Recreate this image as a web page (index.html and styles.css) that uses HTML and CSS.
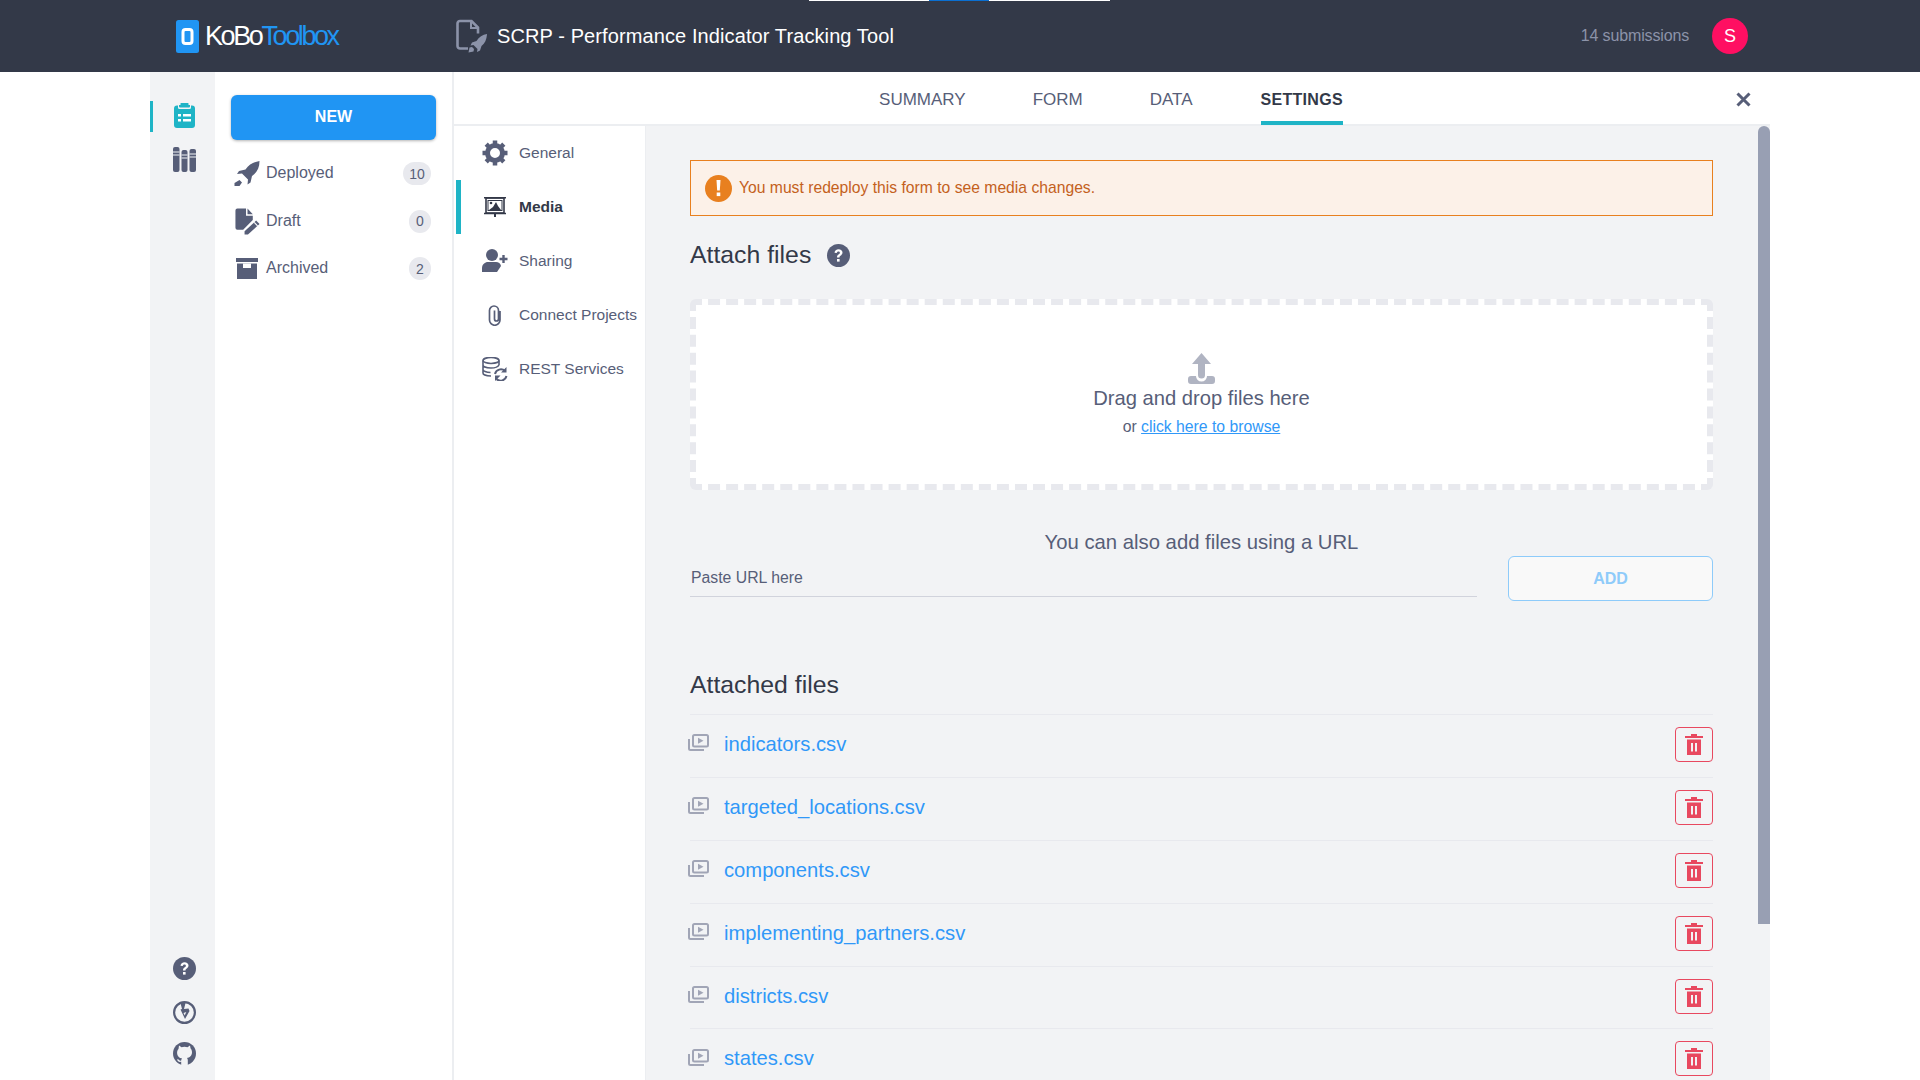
FILE: index.html
```html
<!DOCTYPE html>
<html lang="en">
<head>
    <meta charset="UTF-8">
    <title>KoBoToolbox</title>
    <link rel="stylesheet" href="styles.css">
</head>
<body>
    <div class="loadingStrip">
        <span class="stripWhite"></span><span class="stripBlue"></span><span class="stripWhite stripShort"></span>
    </div>

    <header class="topBar">
        <div class="logo">
            <svg class="logoMark" width="23" height="33" viewBox="0 0 23 33">
                <rect width="23" height="33" rx="2.5" fill="#2095f3"/>
                <rect x="7" y="9.5" width="9" height="14" rx="2.5" fill="none" stroke="#fff" stroke-width="3"/>
            </svg>
            <span class="logoKobo">KoBo</span><span class="logoToolbox">Toolbox</span>
        </div>
        <div class="assetTitle">
            <svg width="31" height="34" viewBox="0 0 31 34">
                <path d="M12 29.500H4A2.500 2.500 0 0 1 1.500 27V4.500A2.500 2.500 0 0 1 4 2h11.500l6.500 6.500v6" fill="none" stroke="#8c93a9" stroke-width="2.6"/>
                <path d="M15 2.500v6.500h7" fill="none" stroke="#8c93a9" stroke-width="2"/>
                <path d="M31 15c-4.500.5-8 3-10.500 7l-4.500 1.500-1.500 3 3-.5 4 4-.5 3 3-1.500 1.500-4.500c3.500-2.500 5-6.500 5.500-11.500zM12.500 33.500l1-5 2.500-.5 2 2-.5 2.500z" fill="#8c93a9"/>
            </svg>
            <span>SCRP - Performance Indicator Tracking Tool</span>
        </div>
        <div class="submissionCount">14 submissions</div>
        <div class="avatar">S</div>
    </header>

    <div class="pageWrap">
        <nav class="iconRail">
            <div class="railTop">
                <a class="railItem railActive">
                    <svg width="21" height="25" viewBox="0 0 21 25">
                        <path d="M5 2h1.500V.5a.5.5 0 0 1 .5-.5h7a.5.5 0 0 1 .5.5V2H16v1.500a1 1 0 0 1-1 1H6a1 1 0 0 1-1-1z" fill="#1fb4c6"/>
                        <path d="M3 2.500h1v2A1.500 1.500 0 0 0 5.500 6h10A1.500 1.500 0 0 0 17 4.500v-2h1a3 3 0 0 1 3 3V22a3 3 0 0 1-3 3H3a3 3 0 0 1-3-3V5.500a3 3 0 0 1 3-3z" fill="#1fb4c6"/>
                        <path d="M4 11h3v2.400H4zM9 11h8v2.400H9zM4 16h3v2.400H4zM9 16h8v2.400H9z" fill="#fff"/>
                    </svg>
                </a>
                <a class="railItem">
                    <svg width="23" height="25" viewBox="0 0 23 25">
                        <rect width="6.500" height="25" rx="2" fill="#575e78"/>
                        <rect x="8.500" y="3" width="6" height="22" rx="2" fill="#575e78"/>
                        <rect x="16.500" y="2" width="6.500" height="23" rx="2" fill="#575e78"/>
                        <path d="M0 5h6.500M0 8h6.500M8.500 8h6M8.500 11h6M16.500 7h6.500M16.500 10h6.500" stroke="#f2f3f5" stroke-width="1.100"/>
                    </svg>
                </a>
            </div>
            <div class="railBottom">
                <a class="railSmall railHelp">
                    <svg width="23" height="23" viewBox="0 0 23 23"><use href="#helpCircle"/></svg>
                </a>
                <a class="railSmall">
                    <svg width="23" height="23" viewBox="0 0 23 23">
                        <circle cx="11.500" cy="11.500" r="10.400" fill="none" stroke="#575e78" stroke-width="2.200"/>
                        <path d="M7.500 2h5l-1.500 6 4.500-.5 1 2.500-4.500 8-4.500-9.500 1.500-.5z" fill="#575e78"/>
                        <path d="M10.500 12l2.800-1-1.600 3.500z" fill="#f2f3f5"/>
                    </svg>
                </a>
                <a class="railSmall">
                    <svg width="23" height="23" viewBox="0 0 23 23">
                        <circle cx="11.500" cy="11.500" r="11.500" fill="#575e78"/>
                        <path d="M6 3.500l2.500 1.800a10 10 0 0 1 6 0L17 3.500l.6 3.100c1 1.100 1.400 2.300 1.400 3.700 0 3.600-2.400 5.400-5 5.700.6.600.8 1.300.8 2.200V23H8.200v-3.200c-2.200.5-3.500-.3-4.200-2.500l1.600.3c.6 1 1.300 1.300 2.600.9.100-.9.400-1.600.9-2-2.600-.4-5-2.200-5-5.700 0-1.400.4-2.600 1.400-3.700z" fill="#f2f3f5"/>
                    </svg>
                </a>
            </div>
        </nav>

        <aside class="formsColumn">
            <button class="newButton">NEW</button>
            <ul class="stateList">
                <li class="stateItem">
                    <svg width="26" height="26" viewBox="0 0 26 26">
                        <path d="M25.500 0c-6 1-10.500 3.500-14 8.500l-6.500 1.500-2 3 5-.5 6 6-.5 5 3-2 1.500-6.500c5-3.500 7.500-8 7.500-15zM5.500 19l2.500 2.500-2.500 3.500H.500v-3z" fill="#575e78"/>
                    </svg>
                    <span class="stateName">Deployed</span>
                    <span class="stateBadge">10</span>
                </li>
                <li class="stateItem">
                    <svg width="26" height="27" viewBox="-1.500 0 27 27">
                        <path d="M2 0h9v7.500h7v4.500L8 22H2a2 2 0 0 1-2-2V2a2 2 0 0 1 2-2z" fill="#575e78"/>
                        <path d="M12.500 0l5.500 6h-5.500z" fill="#575e78"/>
                        <path d="M21.500 12.500l3.500 3.500-12 11H9.500v-3.500z" fill="#575e78"/>
                        <path d="M19.500 14.500l3.500 3.500" stroke="#fff" stroke-width="1.200"/>
                    </svg>
                    <span class="stateName">Draft</span>
                    <span class="stateBadge badgeSmall">0</span>
                </li>
                <li class="stateItem">
                    <svg width="26" height="22" viewBox="-2 0 26 22">
                        <rect width="22" height="4" fill="#575e78"/>
                        <path d="M1 5.500h20V21H1z" fill="#575e78"/>
                        <rect x="7" y="5.500" width="8" height="4.500" fill="#fff"/>
                    </svg>
                    <span class="stateName">Archived</span>
                    <span class="stateBadge badgeSmall">2</span>
                </li>
            </ul>
        </aside>

        <main class="formView">
            <div class="tabBar">
                <a class="tab">SUMMARY</a>
                <a class="tab">FORM</a>
                <a class="tab">DATA</a>
                <a class="tab tabActive">SETTINGS</a>
                <a class="closeLink">
                    <svg width="15" height="15" viewBox="0 0 15 15">
                        <path d="M1.500 1.500l12 12M13.500 1.500l-12 12" stroke="#575e78" stroke-width="3"/>
                    </svg>
                </a>
            </div>

            <div class="settingsBody">
                <ul class="settingsNav">
                    <li class="settingsItem">
                        <svg width="26" height="26" viewBox="0 0 26 26">
                            <circle cx="13" cy="13" r="7.500" fill="none" stroke="#575e78" stroke-width="5"/>
                            <path d="M13 .5v4M13 21.500v4M.5 13h4M21.500 13h4M4.200 4.200l2.800 2.800M19 19l2.800 2.800M21.800 4.200L19 7M7 19l-2.800 2.800" stroke="#575e78" stroke-width="4.500"/>
                        </svg>
                        <span>General</span>
                    </li>
                    <li class="settingsItem settingsActive">
                        <svg width="26" height="20" viewBox="-2 0 26 20">
                            <path d="M0 .8h22M0 16.500h22" stroke="#333848" stroke-width="1.600"/>
                            <rect x="2" y="1" width="18" height="15" fill="none" stroke="#333848" stroke-width="1.600"/>
                            <rect x="4" y="3.500" width="14" height="10" fill="none" stroke="#333848"/>
                            <path d="M5 13l4-3 3-5 2 4 3 4z" fill="#333848"/>
                            <circle cx="7" cy="6" r="1.300" fill="#333848"/>
                            <path d="M10 17h2v3h-2z" fill="#333848"/>
                        </svg>
                        <span>Media</span>
                    </li>
                    <li class="settingsItem">
                        <svg width="26" height="24" viewBox="0 0 26 24">
                            <circle cx="10" cy="6" r="6" fill="#575e78"/>
                            <path d="M0 23v-4c0-3.500 3-6 6-6h8c2.500 0 4.500 1.500 5 4l-4 6z" fill="#575e78"/>
                            <path d="M21.500 6v8M17.500 10h8" stroke="#575e78" stroke-width="2.400"/>
                        </svg>
                        <span>Sharing</span>
                    </li>
                    <li class="settingsItem">
                        <svg width="26" height="21" viewBox="-5.500 0 26 21">
                            <path d="M12.500 6v9a5 5 0 0 1-10.500 0V5.500a4.500 4.500 0 0 1 9 0V14a2 2 0 0 1-4 0V5.500" fill="none" stroke="#575e78" stroke-width="1.700"/>
                        </svg>
                        <span>Connect Projects</span>
                    </li>
                    <li class="settingsItem">
                        <svg width="26" height="24" viewBox="0 0 26 24">
                            <ellipse cx="9" cy="3.500" rx="8" ry="3" fill="none" stroke="#575e78" stroke-width="1.600"/>
                            <path d="M1 3.500V16c0 1.500 3 3 8 3M17 3.500V8M1 8c0 1.500 3 3 8 3s7-1 8-3M1 12.500c0 1.500 3 3 7.500 3" fill="none" stroke="#575e78" stroke-width="1.600"/>
                            <path d="M13 17a6 6 0 0 1 10-3M24.500 19a6 6 0 0 1-10 3" fill="none" stroke="#575e78" stroke-width="2"/>
                            <path d="M24.500 10v5.500H19zM13 24v-5.500h5.500z" fill="#575e78"/>
                        </svg>
                        <span>REST Services</span>
                    </li>
                </ul>

                <div class="mediaPane">
                    <div class="alertBox">
                        <svg width="27" height="27" viewBox="0 0 27 27">
                            <circle cx="13.500" cy="13.500" r="13.500" fill="#e8801f"/>
                            <path d="M11.500 5h4l-.7 10.500h-2.600z" fill="#fff"/>
                            <rect x="11.700" y="17.500" width="3.600" height="3.600" fill="#fff"/>
                        </svg>
                        <span>You must redeploy this form to see media changes.</span>
                    </div>

                    <h2 class="sectionHead">Attach files
                        <svg width="23" height="23" viewBox="0 0 23 23"><use href="#helpCircle"/></svg>
                    </h2>

                    <div class="dropZone">
                        <svg width="29" height="31" viewBox="-1 0 29 31">
                            <path d="M13.500 0L23 11h-6v11a3.500 3.500 0 0 1-7 0V11H4z" fill="#b0b4c2"/>
                            <path d="M0 26a3 3 0 0 1 3-3h5a5.500 5.500 0 0 0 11 0h5a3 3 0 0 1 3 3v2a3 3 0 0 1-3 3H3a3 3 0 0 1-3-3z" fill="#b0b4c2"/>
                        </svg>
                        <div class="dropTitle">Drag and drop files here</div>
                        <div class="dropSub">or <a>click here to browse</a></div>
                    </div>

                    <div class="urlTitle">You can also add files using a URL</div>
                    <div class="urlRow">
                        <input class="urlInput" type="text" placeholder="Paste URL here">
                        <button class="addButton">ADD</button>
                    </div>

                    <h2 class="sectionHead attachedHead">Attached files</h2>
                    <ul class="fileList">
                        <li class="fileRow">
                            <svg class="fileIcon" width="21" height="17" viewBox="0 0 21 17"><use href="#mediaFile"/></svg>
                            <a class="fileName">indicators.csv</a>
                            <button class="trashButton"><svg width="20" height="23" viewBox="0 0 20 23"><use href="#trash"/></svg></button>
                        </li>
                        <li class="fileRow">
                            <svg class="fileIcon" width="21" height="17" viewBox="0 0 21 17"><use href="#mediaFile"/></svg>
                            <a class="fileName">targeted_locations.csv</a>
                            <button class="trashButton"><svg width="20" height="23" viewBox="0 0 20 23"><use href="#trash"/></svg></button>
                        </li>
                        <li class="fileRow">
                            <svg class="fileIcon" width="21" height="17" viewBox="0 0 21 17"><use href="#mediaFile"/></svg>
                            <a class="fileName">components.csv</a>
                            <button class="trashButton"><svg width="20" height="23" viewBox="0 0 20 23"><use href="#trash"/></svg></button>
                        </li>
                        <li class="fileRow">
                            <svg class="fileIcon" width="21" height="17" viewBox="0 0 21 17"><use href="#mediaFile"/></svg>
                            <a class="fileName">implementing_partners.csv</a>
                            <button class="trashButton"><svg width="20" height="23" viewBox="0 0 20 23"><use href="#trash"/></svg></button>
                        </li>
                        <li class="fileRow">
                            <svg class="fileIcon" width="21" height="17" viewBox="0 0 21 17"><use href="#mediaFile"/></svg>
                            <a class="fileName">districts.csv</a>
                            <button class="trashButton"><svg width="20" height="23" viewBox="0 0 20 23"><use href="#trash"/></svg></button>
                        </li>
                        <li class="fileRow">
                            <svg class="fileIcon" width="21" height="17" viewBox="0 0 21 17"><use href="#mediaFile"/></svg>
                            <a class="fileName">states.csv</a>
                            <button class="trashButton"><svg width="20" height="23" viewBox="0 0 20 23"><use href="#trash"/></svg></button>
                        </li>
                    </ul>
                </div>
                <div class="scrollTrack"><div class="scrollThumb"></div></div>
            </div>
        </main>
    </div>

    <svg class="iconDefs" width="0" height="0">
        <symbol id="helpCircle" viewBox="0 0 23 23">
            <circle cx="11.500" cy="11.500" r="11.500" fill="#575e78"/>
            <path d="M7.500 8.800c.2-2.300 1.900-3.500 4-3.500 2.300 0 4 1.300 4 3.300 0 1.500-.8 2.300-2 3.100-.8.500-1 .9-1 1.800h-2.500c0-1.600.4-2.400 1.500-3.100.9-.6 1.400-1 1.400-1.700 0-.8-.7-1.300-1.500-1.300-.9 0-1.500.6-1.700 1.600z" fill="#fff"/>
            <rect x="10" y="15" width="2.600" height="2.600" fill="#fff"/>
        </symbol>
        <symbol id="mediaFile" viewBox="0 0 21 17">
            <path d="M1 5v9.500A1.500 1.500 0 0 0 2.500 16H16" fill="none" stroke="#a1a5b6" stroke-width="2"/>
            <rect x="5" y="1" width="15" height="11.500" rx="1.500" fill="none" stroke="#a1a5b6" stroke-width="2"/>
            <path d="M10 3.800l5.500 3-5.500 3z" fill="#a1a5b6"/>
        </symbol>
        <symbol id="trash" viewBox="0 0 20 23">
            <path d="M7 1h6v2h6v2H1V3h6z" fill="#e8485f"/>
            <path d="M3 6.500h14V22H3zM7 10v8.500h2V10zM11 10v8.500h2V10z" fill="#e8485f" fill-rule="evenodd"/>
        </symbol>
    </svg>
</body>
</html>
```

FILE: styles.css
```css
* {
    box-sizing: border-box;
}

html, body {
    height: 100%;
}

body {
    margin: 0;
    background-color: #fff;
    font-family: "Liberation Sans", Arial, sans-serif;
    color: #575e78;
    overflow: hidden;
    position: relative;
}

ul {
    list-style: none;
    margin: 0;
    padding: 0;
}

.loadingStrip {
    position: absolute;
    top: 0;
    left: 809px;
    display: flex;
    height: 1px;
}

.stripWhite {
    width: 120px;
    background-color: #fff;
}

.stripBlue {
    width: 60px;
    background-color: #0a6fd1;
}

.stripShort {
    width: 121px;
}

.topBar {
    height: 72px;
    background-color: #333948;
    display: flex;
    align-items: center;
    padding-left: 176px;
    padding-right: 172px;
}

.logo {
    width: 280px;
    display: flex;
    align-items: center;
    font-size: 27px;
    letter-spacing: -2.4px;
}

.logoMark {
    margin-right: 6px;
}

.logoKobo {
    color: #fff;
}

.logoToolbox {
    color: #2095f3;
}

.assetTitle {
    flex: 1;
    display: flex;
    align-items: center;
    gap: 10px;
    font-size: 20px;
    letter-spacing: 0.1px;
    color: #fff;
}

.submissionCount {
    font-size: 16px;
    letter-spacing: -0.15px;
    color: #8c93a9;
    margin-right: 23px;
}

.avatar {
    width: 36px;
    height: 36px;
    border-radius: 50%;
    background-color: #ff0f62;
    color: #fff;
    font-size: 18px;
    display: flex;
    align-items: center;
    justify-content: center;
}

.pageWrap {
    margin: 0 150px;
    height: 1008px;
    display: flex;
}

.iconRail {
    width: 65px;
    background-color: #f2f3f5;
    display: flex;
    flex-direction: column;
    justify-content: space-between;
}

.railTop {
    padding-top: 29px;
}

.railItem {
    display: flex;
    justify-content: center;
    height: 31px;
    margin-bottom: 15px;
    padding-left: 3px;
}

.railActive {
    border-left: 3px solid #1fb4c6;
    padding-left: 0;
    padding-top: 2px;
}

.railBottom {
    display: flex;
    flex-direction: column;
    align-items: center;
    gap: 18px;
    padding-left: 3px;
    padding-bottom: 15px;
}

.railSmall {
    display: block;
    height: 23px;
}

.railHelp {
    margin-bottom: 3px;
}

.formsColumn {
    width: 239px;
    border-right: 2px solid #eceef1;
    padding: 23px 16px 0 16px;
}

.newButton {
    display: block;
    width: 205px;
    height: 45px;
    border: none;
    border-radius: 6px;
    background-color: #2095f3;
    color: #fff;
    font-family: inherit;
    font-size: 16px;
    font-weight: bold;
    padding-bottom: 2px;
    box-shadow: 0 1px 3px rgba(0, 0, 0, 0.3);
}

.stateList {
    margin-top: 10px;
    padding-left: 3px;
}

.stateItem {
    height: 47.5px;
    display: flex;
    align-items: center;
    font-size: 16px;
}

.stateItem svg {
    flex-shrink: 0;
}

.stateName {
    flex: 1;
    margin-left: 6px;
    margin-top: -1px;
}

.stateBadge {
    min-width: 28px;
    height: 23px;
    border-radius: 12px;
    background-color: #e8e9ee;
    font-size: 14px;
    display: flex;
    align-items: center;
    justify-content: center;
    margin-right: 5px;
}

.badgeSmall {
    min-width: 22px;
}

.formView {
    flex: 1;
    display: flex;
    flex-direction: column;
    min-width: 0;
}

.tabBar {
    height: 54px;
    border-bottom: 2px solid #eceef1;
    display: flex;
    justify-content: center;
    gap: 67px;
    position: relative;
    padding-right: 2px;
}

.tab {
    font-size: 17px;
    color: #575e78;
    line-height: 56px;
    height: 53px;
}

.tabActive {
    font-size: 16px;
    font-weight: bold;
    color: #333948;
    border-bottom: 4px solid #1fb4c6;
    letter-spacing: 0.3px;
    margin-left: 1px;
}

.closeLink {
    position: absolute;
    right: 19px;
    top: 20px;
    display: block;
    height: 15px;
}

.settingsBody {
    flex: 1;
    display: flex;
    min-height: 0;
    background-color: #f2f3f5;
    position: relative;
}

.settingsNav {
    width: 192px;
    background-color: #fff;
    border-right: 1px solid #eceef1;
    padding-left: 2px;
}

.settingsItem {
    height: 54px;
    display: flex;
    align-items: center;
    font-size: 15.5px;
    padding-left: 21px;
    gap: 11px;
    border-left: 5px solid transparent;
}

.settingsItem svg {
    flex-shrink: 0;
}

.settingsItem span {
    margin-top: -1px;
}

.settingsActive {
    border-left-color: #1fb4c6;
    font-weight: bold;
    color: #333948;
}

.mediaPane {
    flex: 1;
    padding: 34px 57px 0 44px;
    overflow: hidden;
    min-width: 0;
}

.alertBox {
    height: 56px;
    background-color: #fcf1e8;
    border: 1px solid #e8801f;
    color: #c4611d;
    display: flex;
    align-items: center;
    font-size: 15.7px;
    padding-left: 14px;
    gap: 7px;
}

.sectionHead {
    margin: 25px 0 0 0;
    font-size: 24.8px;
    line-height: 28px;
    font-weight: normal;
    color: #333948;
    display: flex;
    align-items: center;
    gap: 16px;
}

.dropZone {
    margin-top: 30px;
    height: 191px;
    background-color: #fff;
    border: 6px dashed #e8e9ee;
    border-radius: 6px;
    display: flex;
    flex-direction: column;
    align-items: center;
    padding-top: 48px;
}

.dropTitle {
    font-size: 20.2px;
    margin-top: 3px;
}

.dropSub {
    font-size: 15.75px;
    margin-top: 8px;
}

.dropSub a {
    color: #3098f8;
    text-decoration: underline;
}

.urlTitle {
    font-size: 20.3px;
    text-align: center;
    margin-top: 41px;
}

.urlRow {
    display: flex;
    justify-content: space-between;
    align-items: flex-start;
    margin-top: 2px;
}

.urlInput {
    width: 787px;
    height: 41px;
    border: none;
    border-bottom: 1px solid #d1d3dc;
    background: transparent;
    font-family: inherit;
    font-size: 15.8px;
    padding: 4px 1px 0 1px;
    color: #575e78;
}

.urlInput::placeholder {
    color: #575e78;
    opacity: 1;
}

.addButton {
    width: 205px;
    height: 45px;
    border: 1px solid #8ecbfa;
    border-radius: 6px;
    background-color: #f9f9f9;
    color: #8ecbfa;
    font-family: inherit;
    font-size: 16px;
    font-weight: bold;
}

.attachedHead {
    margin-top: 70px;
}

.fileList {
    margin-top: 15px;
}

.fileRow {
    height: 62.9px;
    border-top: 1px solid #e8e9ee;
    display: flex;
    align-items: center;
}

.fileIcon {
    margin-left: -2px;
    margin-top: -6px;
    margin-right: 15px;
}

.fileName {
    flex: 1;
    font-size: 20.2px;
    color: #3098f8;
    margin-bottom: 3px;
}

.trashButton {
    width: 38px;
    height: 35px;
    border: 1px solid #e8485f;
    border-radius: 4px;
    background: transparent;
    padding: 0;
    margin-bottom: 3px;
    display: flex;
    align-items: center;
    justify-content: center;
}

.scrollTrack {
    position: absolute;
    top: 0;
    right: 0;
    width: 12px;
    height: 100%;
}

.scrollThumb {
    height: 798px;
    background-color: #989fb3;
    border-radius: 6px 6px 0 0;
}

.iconDefs {
    position: absolute;
}
```
